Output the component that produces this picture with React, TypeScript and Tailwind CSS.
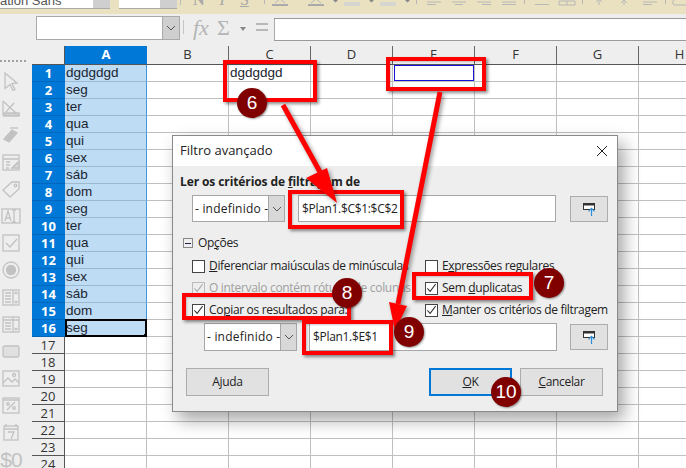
import React from 'react';

const cols = ['A', 'B', 'C', 'D', 'E', 'F', 'G', 'H'];
const colA = ['dgdgdgd', 'seg', 'ter', 'qua', 'qui', 'sex', 'sáb', 'dom', 'seg', 'ter', 'qua', 'qui', 'sex', 'sáb', 'dom', 'seg'];
const rows = Array.from({ length: 24 }, (_, i) => i + 1);

const Chevron = () => (
  <svg width="10" height="6" viewBox="0 0 10 6" fill="none" stroke="#555" strokeWidth="1">
    <path d="M1 1l4 4 4-4" />
  </svg>
);

const Check = ({ color = '#333' }: { color?: string }) => (
  <svg width="12" height="12" viewBox="0 0 12 12" fill="none" stroke={color} strokeWidth="1.1">
    <path d="M1.5 6.5l3 3.2L10.5 1.8" />
  </svg>
);

const CheckBox = ({ checked, disabled, label }: { checked?: boolean; disabled?: boolean; label: React.ReactNode }) => (
  <div className={disabled ? 'flex items-center gap-[4px] h-[22px] text-[#a0a0a0]' : 'flex items-center gap-[4px] h-[22px] text-[#222]'}>
    <div className={disabled ? 'w-[11px] h-[11px] shrink-0 box-content border border-[#bbb] bg-[#eee] flex items-center justify-center' : 'w-[11px] h-[11px] shrink-0 box-content border border-[#444] bg-white flex items-center justify-center'}>
      {checked && <Check color={disabled ? '#aaa' : '#333'} />}
    </div>
    <span className="whitespace-nowrap">{label}</span>
  </div>
);

const UndefinedSelect = () => (
  <div className="w-[93px] h-full flex border border-[#a6a6a6] bg-white shrink-0">
    <div className="flex-1 flex items-center pl-[2px] whitespace-nowrap tracking-[0.2px]">- indefinido -</div>
    <div className="w-[17px] bg-[#d8d8d8] border-l border-[#a6a6a6] flex items-center justify-center">
      <Chevron />
    </div>
  </div>
);

const ShrinkButton = () => (
  <div className="w-[38px] h-[26px] bg-[#e1e1e1] border border-[#adadad] flex items-center justify-center shrink-0">
    <svg width="14" height="14" viewBox="0 0 14 14" fill="none">
      <rect x="1.500" y="1.500" width="11" height="6" fill="#fff" stroke="#333" />
      <rect x="1" y="1" width="12" height="2.500" fill="#333" />
      <path d="M9.500 14V6.500M6.500 9.300l3-3 3 3" stroke="#2e8fd8" strokeWidth="1.200" />
    </svg>
  </div>
);

const Push = ({ children, wide }: { children: React.ReactNode; wide?: boolean }) => (
  <div className={wide ? 'w-[83px] h-[28px] bg-[#e1e1e1] border-2 border-[#0078d7] flex items-center justify-center' : 'w-[83px] h-[28px] bg-[#e1e1e1] border border-[#adadad] flex items-center justify-center'}>
    {children}
  </div>
);

const RedBox = ({ className }: { className: string }) => (
  <div className={'absolute border-[4px] border-[#ff0000] shadow-[2px_2px_3px_rgba(0,0,0,0.45),inset_1px_1px_2px_rgba(0,0,0,0.2)] ' + className} />
);

const Badge = ({ className, children }: { className: string; children: React.ReactNode }) => (
  <div className={'absolute w-[30px] h-[30px] rounded-full bg-[#800000] text-white flex items-center justify-center text-[19px] shadow-[1px_1px_2px_rgba(0,0,0,0.4)] font-["Liberation_Sans",sans-serif] ' + className}>
    {children}
  </div>
);

const SideIcon = ({ children }: { children: React.ReactNode }) => (
  <svg width="20" height="20" viewBox="0 0 20 20" fill="none" stroke="#c2c2c2" strokeWidth="1.3" className="shrink-0">
    {children}
  </svg>
);

function Sidebar() {
  return (
    <div className="w-[32px] shrink-0 flex flex-col items-center relative">
      <div className="w-[26px] mt-[14px] ml-[-6px] border-t-2 border-dotted border-[#a0a0a0]" />
      <div className="flex flex-col gap-[7px] mt-[9px] ml-[-10px]">
        <SideIcon><path d="M4 2l12 10-5 .5 3 6-2 1-3-6-5 4z" /></SideIcon>
        <SideIcon><path d="M2 3l14 13M2 3v14h17M13 5l-8 9" /><path d="M3 15h15v3H3z" fill="#d0d0d0" /></SideIcon>
        <SideIcon><path d="M3 14l8-9 5 3-8 9z" fill="#c2c2c2" /><path d="M9 3l8 0" /></SideIcon>
        <SideIcon><rect x="2" y="3" width="16" height="15" /><path d="M2 7h16M5 10h4M5 13h4M5 16h3M11 16l6-6" /><path d="M11 16h7v-6z" fill="#d8d8d8" /></SideIcon>
        <SideIcon><path d="M2 11L11 3h7v7l-9 8z" /><circle cx="14.500" cy="6.500" r="1.300" /></SideIcon>
        <SideIcon><rect x="1" y="3" width="18" height="14" /><path d="M4 15l3-10 3 10M5 12h4M13 4v12M11 4h4M11 16h4" /></SideIcon>
        <SideIcon><rect x="2" y="2" width="16" height="16" /><path d="M5 10l4 4 7-8" /></SideIcon>
        <SideIcon><circle cx="10" cy="10" r="8" /><circle cx="10" cy="10" r="4.500" fill="#c2c2c2" /></SideIcon>
        <SideIcon><rect x="2" y="3" width="16" height="15" /><path d="M4 6h6M4 9h6M4 12h6M4 15h6M12 3v15M13.500 7l1.500-2 1.500 2M13.500 14l1.500 2 1.500-2" /></SideIcon>
        <SideIcon><rect x="2" y="3" width="16" height="15" /><path d="M2 6h16M4 9h6M4 12h6M4 15h6M12 3v15M13.500 14l1.500 2 1.500-2" /></SideIcon>
        <SideIcon><rect x="2" y="5" width="16" height="11" rx="1.500" fill="#e0e0e0" /></SideIcon>
        <SideIcon><rect x="2" y="3" width="16" height="15" /><path d="M2 15l5-5 4 4 3-3 4 4" /><circle cx="13" cy="7" r="1.500" /></SideIcon>
        <SideIcon><rect x="2" y="3" width="16" height="15" /><path d="M2 5h16M6 15l8-8" /><circle cx="7" cy="9" r="1.300" /><circle cx="13" cy="13" r="1.300" /></SideIcon>
        <SideIcon><rect x="3" y="4" width="14" height="14" /><path d="M3 7h14M5 2v3M15 2v3M7 10h6l-3 7" /></SideIcon>
        <div className="h-[20px] w-[20px] flex items-center justify-center text-[21px] leading-none tracking-[-1px] text-[#c2c2c2] font-['Liberation_Sans',sans-serif]">$0</div>
      </div>
    </div>
  );
}

function Sheet() {
  return (
    <div className="flex-1 flex flex-col overflow-hidden font-['Liberation_Sans',sans-serif] text-[13.5px] text-[#1a2530]">
      {/* column headers */}
      <div className="flex h-[19px] shrink-0 border-b border-[#555] w-[800px]">
        <div className="w-[33px] shrink-0 h-[18px] border-r border-[#555]" />
        {cols.map(c => (
          <div
            key={c}
            className={c === 'A'
              ? "w-[82px] shrink-0 bg-[#0078d7] text-white font-bold flex items-center justify-center font-['Open_Sans',sans-serif] text-[13px]"
              : "w-[82px] shrink-0 border-r border-[#666] flex items-center justify-center text-[#333] font-['Open_Sans',sans-serif] text-[13px]"}
          >
            {c}
          </div>
        ))}
      </div>
      {rows.map(r => {
        const selected = r <= 16;
        return (
          <div key={r} className="flex h-[17px] shrink-0 w-[800px]">
            <div
              className={selected
                ? "w-[33px] shrink-0 bg-[#0078d7] border-b border-[#0068bc] text-white font-bold flex items-center justify-center font-['Open_Sans',sans-serif] text-[13px] leading-none"
                : "w-[33px] shrink-0 bg-[#eeeeee] border-b border-r border-[#555] text-[#333] flex items-center justify-center font-['Open_Sans',sans-serif] text-[13px] leading-none"}
            >
              {r}
            </div>
            {cols.map(c => {
              const text = c === 'A' ? colA[r - 1] : c === 'C' && r === 1 ? 'dgdgdgd' : '';
              return (
                <div
                  key={c}
                  className={c === 'A' && selected
                    ? 'relative w-[82px] shrink-0 bg-[#bfdcf5] border-b border-r border-b-[#9db8cf] border-r-[#3f97e0] pl-[1px] leading-[16px] whitespace-nowrap bg-clip-padding'
                    : 'relative w-[82px] shrink-0 bg-white border-b border-r border-[#c0c0c0] pl-[1px] leading-[16px] whitespace-nowrap'}
                >
                  {text}
                  {c === 'A' && r === 16 && (
                    <>
                      <div className="absolute left-0 right-[-1px] top-[-1px] bottom-[-1px] border-2 border-black" />
                      <div className="absolute right-[-3px] bottom-[-3px] w-[5px] h-[5px] bg-black" />
                    </>
                  )}
                  {c === 'E' && r === 1 && (
                    <div className="absolute left-[1px] right-0 top-0 bottom-0 border border-[#1414d8]" />
                  )}
                </div>
              );
            })}
          </div>
        );
      })}
    </div>
  );
}

function Dialog() {
  return (
    <div className="absolute left-[172px] top-[135px] w-[446px] h-[277px] bg-[#eeeeee] border border-[#8a8a8a] shadow-[6px_8px_16px_rgba(0,0,0,0.35)] flex flex-col font-['Open_Sans',sans-serif] text-[12px] tracking-[-0.32px] text-[#222]">
      <div className="h-[30px] shrink-0 bg-white flex items-center justify-between pl-[7px] pr-[9px] text-[13px] tracking-normal">
        <span>Filtro avançado</span>
        <svg width="12" height="12" viewBox="0 0 12 12" stroke="#222" strokeWidth="1" fill="none">
          <path d="M1 1l10 10M11 1L1 11" />
        </svg>
      </div>
      <div className="flex-1 flex flex-col pl-[7px] pr-[9px]">
        <div className="font-bold leading-[18px] mt-[7px] tracking-[-0.1px]">Ler os critérios de <u>f</u>iltragem de</div>
        <div className="flex items-center h-[27px] mt-[4px] ml-[12px] gap-[13px] pr-0">
          <UndefinedSelect />
          <div className="w-[259px] h-full bg-white border border-[#a6a6a6] flex items-center pl-[3px]">$Plan1.$C$1:$C$2</div>
          <div className="ml-[1px]"><ShrinkButton /></div>
        </div>
        <div className="flex items-center mt-[12px] h-[18px] ml-[3px] gap-[5px]">
          <div className="w-[8px] h-[8px] box-content border border-[#888] flex items-center justify-center bg-[#eee]">
            <div className="w-[6px] h-px bg-[#224]" />
          </div>
          <span>Op<u>ç</u>ões</span>
        </div>
        <div className="grid grid-cols-[233px_1fr] ml-[12px] mt-[3px]">
          <CheckBox label={<><u>D</u>iferenciar maiúsculas de minúsculas</>} />
          <CheckBox label={<>E<u>x</u>pressões regulares</>} />
          <CheckBox checked disabled label={<>O intervalo c<u>o</u>ntém rótulos de colunas</>} />
          <CheckBox checked label={<>Sem <u>d</u>uplicatas</>} />
          <CheckBox checked label={<>Co<u>p</u>iar os resultados para:</>} />
          <CheckBox checked label={<><u>M</u>anter os critérios de filtragem</>} />
        </div>
        <div className="flex items-center h-[28px] mt-[2px] ml-[24px] gap-[12px]">
          <UndefinedSelect />
          <div className="w-[248px] h-full bg-white border border-[#a6a6a6] flex items-center pl-[3px]">$Plan1.$E$1</div>
          <div className="ml-[1px]"><ShrinkButton /></div>
        </div>
        <div className="flex mt-[17px] ml-[6px]">
          <Push>A<u>j</u>uda</Push>
          <div className="ml-[160px]"><Push wide><u>O</u>K</Push></div>
          <div className="ml-[8px]"><Push><u>C</u>ancelar</Push></div>
        </div>
      </div>
    </div>
  );
}

export default function App() {
  return (
    <div className="relative w-[686px] h-[468px] overflow-hidden bg-[#eeeeee]">
      {/* toolbar strip */}
      <div className="h-[14px] bg-[#e9e1c0] overflow-hidden flex items-start relative">
        <div className="w-[93px] h-[9px] bg-white border-b border-[#aaa] shrink-0 overflow-hidden relative font-['Liberation_Sans',sans-serif] text-[13px] text-[#555]">
          <span className="absolute left-0 top-[-9px] whitespace-nowrap">ation Sans</span>
        </div>
        <div className="w-[17px] h-[9px] bg-[#cfcfcf] border-b border-[#aaa] shrink-0" />
        <div className="w-[9px] shrink-0" />
        <div className="w-[41px] h-[9px] bg-white border-b border-[#aaa] shrink-0" />
        <div className="w-[17px] h-[9px] bg-[#cfcfcf] border-b border-[#aaa] shrink-0" />
        <div className="w-[4px] h-[5px] border-r border-[#bbb] shrink-0" />
        <div className="flex gap-[15px] ml-[12px] mt-[-8px] text-[16px] font-bold leading-[15px] text-[#a8a8a8] font-['Liberation_Serif',serif]">
          <span>N</span>
          <span className="italic font-normal">I</span>
          <span className="underline font-normal">S</span>
        </div>
        <svg width="422" height="14" viewBox="264 0 422 14" fill="none" stroke="#b8b8b8" className="absolute left-[264px] top-0">
          <path d="M264.500 0v4M416.500 0v4M524.500 0v4M582.500 0v4M665.500 0v4" />
          <path d="M272 5h16M308 5h16" stroke="#aaa" strokeWidth="2" />
          <path d="M275 3l5-4 5 4M311 3l5-4 5 4" />
          <path d="M344 2h16v4h-16zM380 2h16v4h-16z" fill="#d6d6d0" stroke="none" />
          <path d="M333 0h5l-2.500 2.500zM369 0h5l-2.500 2.500zM405 0h5l-2.500 2.500z" fill="#888" stroke="none" />
          <path d="M427 2h14M427 4.500h9M452 2h14M455 4.500h8M477 2h14M482 4.500h9M502 2h14M502 4.500h14M535 4.500h14M559 1h16v4h-16zM567 1v4M599 0v5M596 2l3-3 3 3M624 0v5M621 3l3-3 3 3M643 2h14M643 4.500h9M674 0a3 3 0 0 0 0 5h12" />
        </svg>
      </div>
      <div className="h-[4px]" />
      {/* formula bar */}
      <div className="h-[23px] flex relative border-t border-b border-[#9a9a9a] w-[686px]">
        <div className="w-[274px] bg-[#eeeeee] mt-[-2px] mb-[-2px] z-10 flex items-start shrink-0 pl-[36px] relative">
          <div className="w-[144px] h-[24px] mt-[-1px] border border-[#aaa] bg-white flex justify-end">
            <div className="w-[17px] bg-[#cfcfcf] border-l border-[#aaa] flex items-center justify-center"><Chevron /></div>
          </div>
          <div className="w-px h-[14px] bg-[#c5c5c5] ml-[3px] mt-[3px]" />
          <span className="ml-[9px] mt-[-1px] text-[22px] leading-[24px] italic text-[#b5b5b5] font-['Liberation_Serif',serif]">fx</span>
          <span className="ml-[8px] mt-[-1px] text-[22px] leading-[24px] text-[#b5b5b5] font-['Liberation_Serif',serif]">Σ</span>
          <svg width="8" height="5" viewBox="0 0 8 5" className="ml-[9px] mt-[10px]"><path d="M1 0h6L4 4z" fill="#888" /></svg>
          <div className="ml-[9px] mt-[6px] w-[12px] flex flex-col gap-[4px]">
            <div className="h-[2px] bg-[#b8b8b8]" />
            <div className="h-[2px] bg-[#b8b8b8]" />
          </div>
        </div>
        <div className="flex-1 bg-white border-l border-[#aaa]" />
      </div>
      <div className="h-[5px]" />
      <div className="flex h-[422px]">
        <Sidebar />
        <Sheet />
      </div>

      <Dialog />

      {/* annotations */}
      <RedBox className="left-[223px] top-[60px] w-[94px] h-[42px]" />
      <RedBox className="left-[386px] top-[57px] w-[100px] h-[34px]" />
      <RedBox className="left-[288px] top-[190px] w-[116px] h-[39px]" />
      <RedBox className="left-[412px] top-[272px] w-[121px] h-[28px]" />
      <RedBox className="left-[182px] top-[293px] w-[169px] h-[27px]" />
      <RedBox className="left-[302px] top-[320px] w-[91px] h-[35px]" />

      <svg width="686" height="468" viewBox="0 0 686 468" className="absolute left-0 top-0 drop-shadow-[2px_2px_2px_rgba(0,0,0,0.4)]">
        <path d="M283 105L320 172" stroke="#ff0000" strokeWidth="5" fill="none" />
        <path d="M306 178L327 168L337 203z" fill="#ff0000" />
        <path d="M440 92L398 304" stroke="#ff0000" strokeWidth="5" fill="none" />
        <path d="M389 302L407 306L395 331z" fill="#ff0000" />
      </svg>

      <Badge className="left-[237px] top-[88px]">6</Badge>
      <Badge className="left-[534px] top-[268px]">7</Badge>
      <Badge className="left-[332px] top-[278px]">8</Badge>
      <Badge className="left-[394px] top-[317px]">9</Badge>
      <Badge className="left-[491px] top-[377px]">10</Badge>
    </div>
  );
}
